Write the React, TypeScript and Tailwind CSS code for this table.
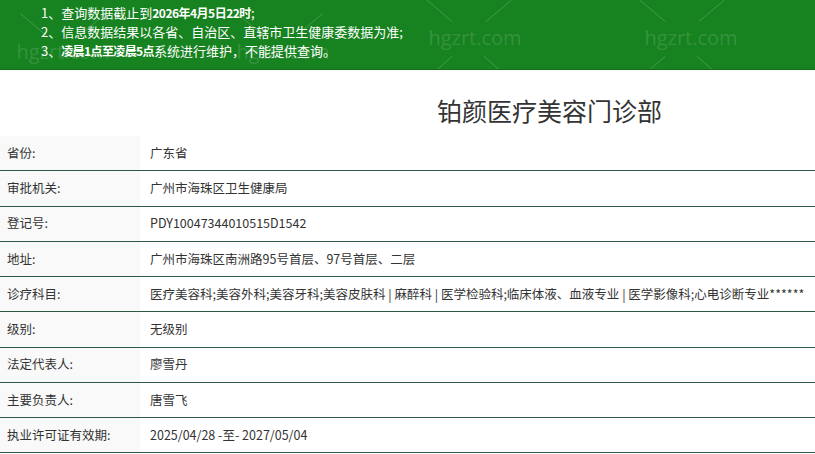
const rows = [
  { label: "省份:", value: "广东省" },
  { label: "审批机关:", value: "广州市海珠区卫生健康局" },
  { label: "登记号:", value: "PDY10047344010515D1542" },
  { label: "地址:", value: "广州市海珠区南洲路95号首层、97号首层、二层" },
  {
    label: "诊疗科目:",
    value:
      "医疗美容科;美容外科;美容牙科;美容皮肤科 | 麻醉科 | 医学检验科;临床体液、血液专业 | 医学影像科;心电诊断专业******",
  },
  { label: "级别:", value: "无级别" },
  { label: "法定代表人:", value: "廖雪丹" },
  { label: "主要负责人:", value: "唐雪飞" },
  { label: "执业许可证有效期:", value: "2025/04/28 -至- 2027/05/04" },
];

// watermark centres inside the banner
const marks = [
  { x: 63, y: 52 },
  { x: 283, y: 52 },
  { x: 475, y: 38 },
  { x: 691, y: 38 },
];

function Watermarks() {
  return (
    <>
      <svg className="absolute inset-0 w-full h-full pointer-events-none" viewBox="0 0 815 70">
        {marks.map((m, i) => (
          <g key={i} stroke="rgba(255,255,255,0.2)" strokeWidth={1}>
            <line x1={m.x - 48} y1={m.y - 38} x2={m.x - 22} y2={m.y - 16} />
            <line x1={m.x + 38} y1={m.y - 38} x2={m.x + 12} y2={m.y - 16} />
            <line x1={m.x - 22} y1={m.y + 19} x2={m.x - 38} y2={m.y + 33} />
            <line x1={m.x + 10} y1={m.y + 19} x2={m.x + 26} y2={m.y + 33} />
          </g>
        ))}
      </svg>
      {marks.map((m, i) => (
        <span
          key={i}
          className="absolute text-[20px] leading-[24px] text-white/15 font-['Open_Sans',sans-serif] -translate-x-1/2 -translate-y-1/2 pointer-events-none"
          style={{ left: m.x, top: m.y }}
        >
          hgzrt.com
        </span>
      ))}
    </>
  );
}

export default function App() {
  return (
    <div className="w-[815px] h-[454px] overflow-hidden bg-white text-[#333] font-['Microsoft_YaHei','Noto_Sans_CJK_SC',sans-serif]">
      {/* Notice banner */}
      <div className="relative h-[70px] bg-[#178220] border-b border-[#146e1b] overflow-hidden">
        <Watermarks />
        <ul className="relative pl-[41px] pt-[3px] text-[13px] leading-[19px] text-white">
          <li>
            1、查询数据截止到<b className="text-[12px] tracking-[-0.5px]">2026年4月5日22时</b>;
          </li>
          <li>2、信息数据结果以各省、自治区、直辖市卫生健康委数据为准;</li>
          <li>
            3、<b className="text-[12px] tracking-[-0.6px]">凌晨1点至凌晨5点</b>系统进行维护，不能提供查询。
          </li>
        </ul>
      </div>

      {/* Title */}
      <div className="h-[66px] pt-[24px] pl-[437px]">
        <h1 className="text-[25px] leading-[32px] font-normal text-[#333]">铂颜医疗美容门诊部</h1>
      </div>

      {/* Detail table */}
      <div className="text-[12.5px]">
        {rows.map((r) => (
          <div key={r.label} className="flex h-[35.25px] border-b border-[#2d5a43]">
            <div className="w-[140px] shrink-0 bg-[#f9f9f9] pl-[7px] flex items-center">{r.label}</div>
            <div className="pl-[10px] flex items-center whitespace-nowrap">{r.value}</div>
          </div>
        ))}
      </div>
    </div>
  );
}
